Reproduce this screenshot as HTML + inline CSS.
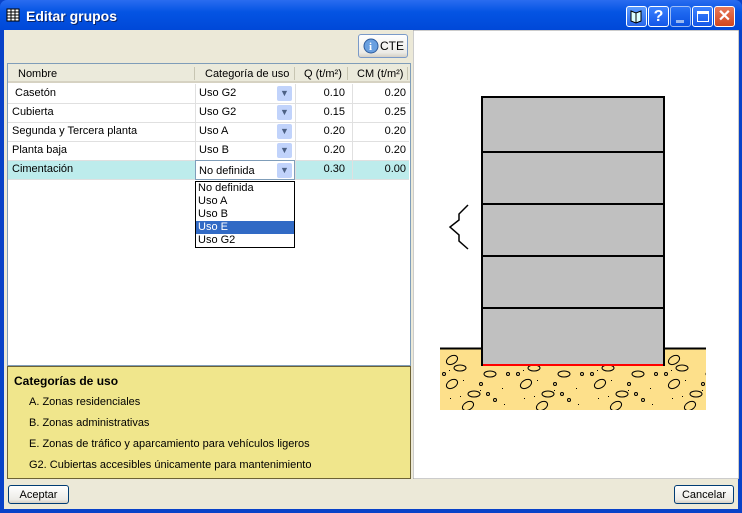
<!DOCTYPE html>
<html><head><style>
*{margin:0;padding:0;box-sizing:border-box}
body{width:742px;height:513px;overflow:hidden;font-family:"Liberation Sans",sans-serif;font-size:11px;background:#0842c8;position:relative}
.a{position:absolute}
#title{left:0;top:0;width:742px;height:30px;background:linear-gradient(#2a6cf0,#0454e3 40%,#0048d8);border-radius:7px 7px 0 0}
#title span{position:absolute;left:26px;top:8px;color:#fff;font-weight:bold;font-size:14px;text-shadow:1px 1px #0a246a}
#body{left:4px;top:30px;width:734px;height:479px;background:#ece9d8}
.tb{position:absolute;top:6px;width:21px;height:21px;border:1px solid #fff;border-radius:3px;background:linear-gradient(#3c82ff,#1356e8)}
.cell{position:absolute;white-space:nowrap;line-height:20px}
.btn{position:absolute;border:1px solid #003c74;border-radius:3px;background:linear-gradient(#fff,#ecebe6 80%,#d6d0c5);text-align:center;line-height:18px;font-size:11px}
.dd{position:absolute;width:15px;height:15px;background:#c1d3fb;border-radius:2px;color:#4d6185;font-size:9px;text-align:center;line-height:15px}
</style></head><body>
<div id="title" class="a"><svg class="a" style="left:6px;top:8px" width="14" height="14"><rect x="1" y="1" width="12" height="12" fill="#fff" stroke="#000"/><path d="M1 4h12M1 7h12M1 10h12M5 1v12M9 1v12" stroke="#000"/></svg><span>Editar grupos</span>
<div class="tb" style="left:626px;background:linear-gradient(#5b9cff,#2a67ea)"><svg width="19" height="19"><path d="M4 4l5 2 5-2v10l-5 2-5-2z" fill="#dff" stroke="#000"/><path d="M9 6v10" stroke="#000"/></svg></div>
<div class="tb" style="left:648px;color:#fff;font-weight:bold;font-size:16px;text-align:center;line-height:19px">?</div>
<div class="tb" style="left:670px;opacity:.6"><div class="a" style="left:5px;top:13px;width:8px;height:3px;background:#fff"></div></div>
<div class="tb" style="left:692px"><div class="a" style="left:4px;top:4px;width:12px;height:11px;border:1px solid #fff;border-top-width:3px"></div></div>
<div class="tb" style="left:714px;background:linear-gradient(#e87a5a,#d0461e);color:#fff;font-size:16px;text-align:center;line-height:19px;font-weight:bold">✕</div>
</div>
<div id="body" class="a"></div>
<div class="btn" style="left:358px;top:34px;width:50px;height:24px;line-height:22px;font-size:12px;border-color:#7a9ac8;padding-left:18px">CTE<svg class="a" style="left:4px;top:3px" width="16" height="16"><circle cx="8" cy="8" r="7" fill="#6aa0e0" stroke="#2d5b9c"/><text x="6" y="12" fill="#fff" font-size="11" font-weight="bold" font-family="Liberation Serif">i</text></svg></div>
<div class="a" style="left:7px;top:63px;width:404px;height:303px;background:#fff;border:1px solid #7f9db9"></div>
<div class="a" style="left:8px;top:64px;width:402px;height:19px;background:#ebeadb;border-bottom:2px solid #d6d2c2"></div>
<div class="cell" style="left:18px;top:64px">Nombre</div>
<div class="cell" style="left:205px;top:64px">Categoría de uso</div>
<div class="cell" style="left:304px;top:64px">Q (t/m²)</div>
<div class="cell" style="left:357px;top:64px">CM (t/m²)</div>
<div class="a" style="left:194px;top:67px;width:1px;height:13px;background:#c7c5b2"></div>
<div class="a" style="left:294px;top:67px;width:1px;height:13px;background:#c7c5b2"></div>
<div class="a" style="left:347px;top:67px;width:1px;height:13px;background:#c7c5b2"></div>
<div class="a" style="left:407px;top:67px;width:1px;height:13px;background:#c7c5b2"></div>
<div class="a" style="left:8px;top:160px;width:401px;height:19px;background:#bdecec"></div>
<div class="a" style="left:8px;top:103px;width:401px;height:1px;background:#e0e0e0"></div>
<div class="a" style="left:8px;top:122px;width:401px;height:1px;background:#e0e0e0"></div>
<div class="a" style="left:8px;top:141px;width:401px;height:1px;background:#e0e0e0"></div>
<div class="a" style="left:8px;top:160px;width:401px;height:1px;background:#e0e0e0"></div>
<div class="a" style="left:8px;top:179px;width:401px;height:1px;background:#e0e0e0"></div>
<div class="a" style="left:195px;top:84px;width:1px;height:96px;background:#e0e0e0"></div>
<div class="a" style="left:295px;top:84px;width:1px;height:96px;background:#e0e0e0"></div>
<div class="a" style="left:352px;top:84px;width:1px;height:96px;background:#e0e0e0"></div>
<div class="a" style="left:195px;top:160px;width:100px;height:20px;background:#fff;border:1px solid #7f9db9"></div>
<div class="cell" style="left:15px;top:83px">Casetón</div>
<div class="cell" style="left:12px;top:102px">Cubierta</div>
<div class="cell" style="left:12px;top:121px">Segunda y Tercera planta</div>
<div class="cell" style="left:12px;top:140px">Planta baja</div>
<div class="cell" style="left:12px;top:159px">Cimentación</div>
<div class="cell" style="left:199px;top:83px">Uso G2</div>
<div class="cell" style="left:199px;top:102px">Uso G2</div>
<div class="cell" style="left:199px;top:121px">Uso A</div>
<div class="cell" style="left:199px;top:140px">Uso B</div>
<div class="cell" style="left:199px;top:161px">No definida</div>
<div class="dd" style="left:277px;top:86px">▼</div>
<div class="dd" style="left:277px;top:105px">▼</div>
<div class="dd" style="left:277px;top:124px">▼</div>
<div class="dd" style="left:277px;top:143px">▼</div>
<div class="dd" style="left:277px;top:163px">▼</div>
<div class="cell" style="left:296px;top:83px;width:49px;text-align:right">0.10</div>
<div class="cell" style="left:296px;top:102px;width:49px;text-align:right">0.15</div>
<div class="cell" style="left:296px;top:121px;width:49px;text-align:right">0.20</div>
<div class="cell" style="left:296px;top:140px;width:49px;text-align:right">0.20</div>
<div class="cell" style="left:296px;top:159px;width:49px;text-align:right">0.30</div>
<div class="cell" style="left:353px;top:83px;width:53px;text-align:right">0.20</div>
<div class="cell" style="left:353px;top:102px;width:53px;text-align:right">0.25</div>
<div class="cell" style="left:353px;top:121px;width:53px;text-align:right">0.20</div>
<div class="cell" style="left:353px;top:140px;width:53px;text-align:right">0.20</div>
<div class="cell" style="left:353px;top:159px;width:53px;text-align:right">0.00</div>
<div class="a" style="left:195px;top:181px;width:100px;height:67px;background:#fff;border:1px solid #000;line-height:13px;font-size:11px">
<div style="padding-left:2px">No definida</div><div style="padding-left:2px">Uso A</div><div style="padding-left:2px">Uso B</div><div style="padding-left:2px;background:#316ac5;color:#fff">Uso E</div><div style="padding-left:2px">Uso G2</div></div>
<div class="a" style="left:7px;top:366px;width:404px;height:113px;background:#f0e68c;border:1px solid #6d6235"></div>
<div class="cell" style="left:14px;top:371px;font-weight:bold;font-size:12px">Categorías de uso</div>
<div class="cell" style="left:29px;top:392px">A. Zonas residenciales</div>
<div class="cell" style="left:29px;top:413px">B. Zonas administrativas</div>
<div class="cell" style="left:29px;top:434px">E. Zonas de tráfico y aparcamiento para vehículos ligeros</div>
<div class="cell" style="left:29px;top:455px">G2. Cubiertas accesibles únicamente para mantenimiento</div>
<svg class="a" style="left:413px;top:30px" width="326" height="449">
<rect x="0" y="0" width="326" height="449" fill="#fff" stroke="#9a9a9a"/>
<defs><pattern id="p" x="27" y="318" width="74" height="64" patternUnits="userSpaceOnUse">
<g fill="none" stroke="#000"><ellipse cx="12" cy="12" rx="6" ry="4" transform="rotate(-30 12 12)"/><ellipse cx="20" cy="20" rx="6" ry="3"/><ellipse cx="50" cy="26" rx="6" ry="3"/><ellipse cx="12" cy="36" rx="6" ry="4" transform="rotate(-30 12 36)"/><ellipse cx="34" cy="46" rx="6" ry="3"/><ellipse cx="28" cy="58" rx="6" ry="4" transform="rotate(-30 28 58)"/><circle cx="4" cy="26" r="1.5"/><circle cx="41" cy="36" r="1.5"/><circle cx="48" cy="46" r="1.5"/><circle cx="68" cy="26" r="1.5"/><circle cx="55" cy="52" r="1.5"/></g>
<g fill="#000"><rect x="9" y="22" width="1" height="1"/><rect x="23" y="32" width="1" height="1"/><rect x="40" y="42" width="1" height="1"/><rect x="62" y="40" width="1" height="1"/><rect x="10" y="50" width="1" height="1"/><rect x="20" y="48" width="1" height="1"/><rect x="64" y="56" width="1" height="1"/><rect x="50" y="14" width="1" height="1"/></g>
</pattern></defs>
<rect x="27" y="318" width="266" height="62" fill="#fde08b"/>
<rect x="27" y="318" width="266" height="62" fill="url(#p)"/>
<path d="M27 318.5H70M250 318.5H293" stroke="#000" stroke-width="2"/>
<rect x="69" y="67" width="182" height="268" fill="#c0c0c0" stroke="#000" stroke-width="2"/>
<path d="M69 122H251M69 174H251M69 226H251M69 278H251" stroke="#000" stroke-width="2"/>
<path d="M70 335H250" stroke="#f00" stroke-width="2"/>
<path d="M55 175L46 184V190L37 197L46 205V211L55 219" fill="none" stroke="#000" stroke-width="1.5"/>
</svg>
<div class="btn" style="left:8px;top:485px;width:61px;height:19px">Aceptar</div>
<div class="btn" style="left:674px;top:485px;width:60px;height:19px">Cancelar</div>
</body></html>
